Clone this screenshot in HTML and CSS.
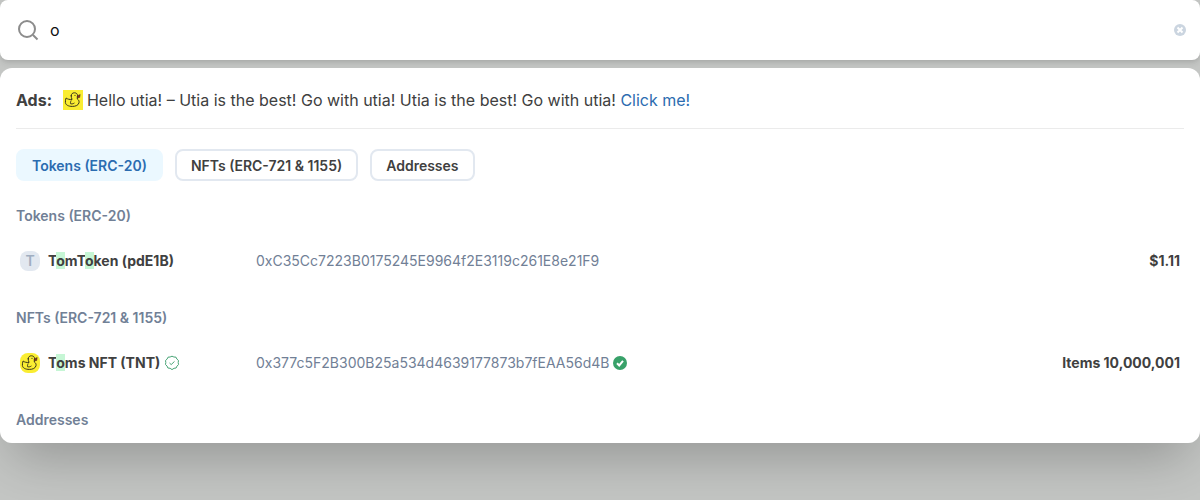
FILE: index.html
```
<!DOCTYPE html>
<html lang="en">
<head>
<meta charset="utf-8">
<title>Search</title>
<link rel="stylesheet" href="styles.css">
</head>
<body>
<svg class="sprite" aria-hidden="true">
  <symbol id="duck" viewBox="0 0 20 20">
    <rect width="20" height="20" fill="#faed32"/>
    <path d="M8.200 5.800C8.200 3.800 9.600 2.800 11.400 2.800c2 0 3.200 1.200 3.200 3 0 1.400-.6 2.200-.3 3.200 1.500 1 2 2.200 1.700 3.700-.6 2.600-3.300 3.700-6.700 3.700-3.800 0-6.700-1.400-6.900-3.900-.1-1.500.1-3 .7-4.500 1.500 1.200 3.500 1.700 6 1.400C8.500 8.400 8.200 7.200 8.200 5.800zM8 10.800c-.6 1.200-.7 2.100-.3 3 1.400.2 2.500 0 3.400-.6" fill="none" stroke="#38341c" stroke-width="1" stroke-linecap="round" stroke-linejoin="round"/>
    <path d="m14 6 3.200-1.500-.5 3-2.200.4z" fill="#8a2c18" stroke="#38341c" stroke-width=".5"/>
    <circle cx="12" cy="5.300" r=".6" fill="#38341c"/>
  </symbol>
</svg>
<main class="dialog">
  <form class="search" role="search">
    <svg class="search-icon" viewBox="0 0 20 20" aria-hidden="true"><circle cx="9" cy="9" r="8"/><path d="m15 15 4.500 4.500"/></svg>
    <input class="search-input" type="text" value="o" aria-label="Search">
    <button class="clear" type="button" aria-label="Clear"><svg viewBox="0 0 12 12"><circle cx="6" cy="6" r="6"/><path d="m3.500 3.500 5 5M8.500 3.500l-5 5"/></svg></button>
  </form>
  <section class="results">
    <div class="ad">
      <b class="ad-label">Ads:</b>
      <svg class="duck"><use href="#duck"/></svg>
      <span>Hello utia! – Utia is the best! Go with utia! Utia is the best! Go with utia! <a href="#">Click me!</a></span>
    </div>
    <nav class="tabs">
      <button class="tab active" type="button">Tokens (ERC-20)</button>
      <button class="tab" type="button">NFTs (ERC-721 &amp; 1155)</button>
      <button class="tab" type="button">Addresses</button>
    </nav>
    <section class="group">
      <h2>Tokens (ERC-20)</h2>
      <a class="row" href="#">
        <span class="name"><span class="avatar">T</span><b>T<mark>o</mark>mT<mark>o</mark>ken (pdE1B)</b></span>
        <span class="hash">0xC35Cc7223B0175245E9964f2E3119c261E8e21F9</span>
        <b class="value">$1.11</b>
      </a>
    </section>
    <section class="group">
      <h2>NFTs (ERC-721 &amp; 1155)</h2>
      <a class="row" href="#">
        <span class="name"><svg class="duck rounded"><use href="#duck"/></svg><b>T<mark>o</mark>ms NFT (TNT)</b><svg class="seal" viewBox="0 0 16 16"><path d="M8 1.200 9.900 2 12 2.200l.9 1.900 1.600 1.400-.3 2 .3 2.100-1.500 1.500-.9 1.900-2.100.3L8 14.600l-1.900-1.300-2.200-.3-.8-1.900-1.600-1.500.3-2.100-.3-2 1.600-1.400L4 2.200 6.100 2z"/><path d="m5.500 8 1.700 1.600 3.300-3.200"/></svg></span>
        <span class="hash">0x377c5F2B300B25a534d4639177873b7fEAA56d4B<svg class="verified" viewBox="0 0 14 14"><circle cx="7" cy="7" r="7"/><path d="m4 7.200 2.200 2.200L10 4.800"/></svg></span>
        <b class="value">Items 10,000,001</b>
      </a>
    </section>
    <section class="group">
      <h2>Addresses</h2>
    </section>
  </section>
</main>
</body>
</html>
```
FILE: styles.css
```
* { box-sizing: border-box; }
body {
  margin: 0;
  min-height: 100vh;
  background: #c4c6c4;
  color: #404040;
  font: 16px/24px Inter, "Liberation Sans", sans-serif;
  overflow: hidden;
}
svg { display: block; flex: none; }
a { color: #2b6cb0; text-decoration: none; }
button { font: inherit; cursor: pointer; }
.sprite { position: absolute; width: 0; height: 0; }
.dialog {
  display: flex;
  flex-direction: column;
  gap: 8px;
  border-radius: 12px;
  box-shadow: 0 25px 50px -12px rgba(0, 0, 0, .25);
}
.search {
  display: flex;
  align-items: center;
  height: 60px;
  padding: 0 14px 0 18px;
  border-radius: 8px;
  background: #fff;
  box-shadow: 0 4px 6px -1px rgba(0, 0, 0, .1), 0 2px 4px -1px rgba(0, 0, 0, .06);
}
.search-icon { width: 20px; height: 20px; overflow: visible; fill: none; stroke: #8c8c8c; stroke-width: 2; }
.search-input {
  flex: 1;
  min-width: 0;
  height: 40px;
  padding: 0 12px;
  border: 0;
  outline: 0;
  background: none;
  color: #101112;
  font: inherit;
}
.clear { padding: 0; border: 0; background: none; }
.clear svg { width: 12px; height: 12px; fill: #cbd5e0; }
.clear path { stroke: #fff; stroke-width: 2; }
.results { padding: 20px 16px 13px; border-radius: 12px; background: #fff; }
.ad { display: flex; align-items: center; padding-bottom: 16px; border-bottom: 1px solid #ebebeb; }
.ad-label { margin-right: 11px; }
.ad .duck { margin-right: 4px; }
.duck { width: 20px; height: 20px; }
.rounded { border-radius: 8px; }
.tabs { display: flex; gap: 12px; margin-top: 20px; font-size: 14px; line-height: 20px; }
.tab {
  height: 32px;
  padding: 1px 14px 0;
  border: 2px solid #e2e8f0;
  border-radius: 8px;
  background: #fff;
  color: #404040;
  font-weight: 600;
}
.active { border-color: #ebf8ff; background: #ebf8ff; color: #2b6cb0; }
.group { margin-top: 25px; font-size: 14px; line-height: 20px; }
h2 { margin: 0; color: #718096; font-size: 14px; font-weight: 600; }
.row {
  display: grid;
  grid-template-columns: 228px 1fr auto;
  gap: 8px;
  align-items: center;
  margin-top: 8px;
  padding: 17px 4px;
  color: #404040;
}
.group + .group { margin-top: 20px; }
.name, .hash { display: flex; align-items: center; }
.name b { margin-left: 8px; }
.hash { color: #718096; }
.avatar {
  width: 20px;
  height: 20px;
  border-radius: 8px;
  background: #e2e8f0;
  color: #a0aec0;
  font-weight: 600;
  text-align: center;
}
mark { background: #c6f6d5; color: inherit; }
.seal { width: 16px; height: 16px; margin-left: 4px; fill: none; stroke: #48a476; stroke-width: 1; }
.verified { width: 14px; height: 14px; margin-left: 4px; fill: #38a169; }
.verified path { fill: none; stroke: #fff; stroke-width: 2; }
```
